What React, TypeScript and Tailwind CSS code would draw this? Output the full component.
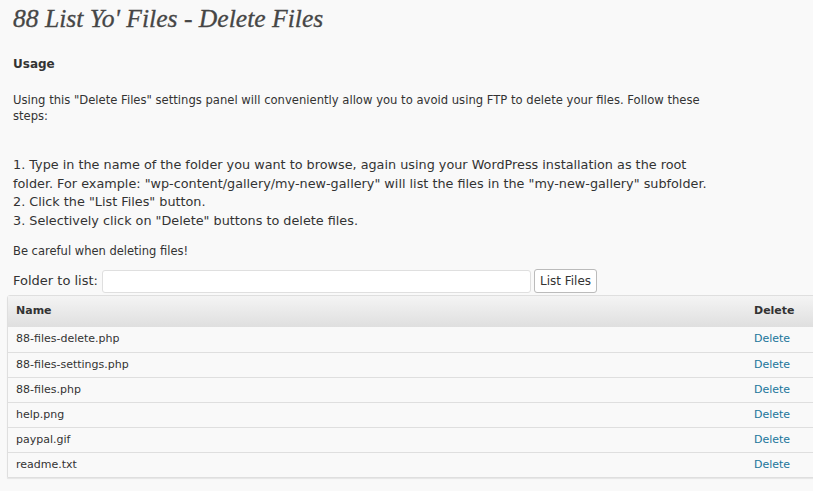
const files = [
  "88-files-delete.php",
  "88-files-settings.php",
  "88-files.php",
  "help.png",
  "paypal.gif",
  "readme.txt",
]

const body = { fontFamily: '"DejaVu Sans", "Liberation Sans", sans-serif' }

export default function App() {
  return (
    <div className="min-h-[491px] w-[813px] overflow-hidden bg-[#f9f9f9] text-[#333]" style={body}>
      <h2
        className="pl-[13px] pt-[2px] text-[25.6px] italic leading-[34px] text-[#464646]"
        style={{ fontFamily: '"Liberation Serif", "DejaVu Serif", serif', WebkitTextStroke: "0.3px #464646" }}
      >
        88 List Yo' Files - Delete Files
      </h2>

      <div className="px-[13px]">
        <h3 className="mt-[20px] text-[12px] font-bold leading-[16px]">Usage</h3>

        <p className="mt-[20px] w-[700px] text-[11.6px] leading-[16px]">
          Using this "Delete Files" settings panel will conveniently allow you to avoid using FTP to delete your files.
          Follow these steps:
        </p>

        <div className="mt-[32px] text-[12.8px] leading-[18.5px]">
          <div>
            1. Type in the name of the folder you want to browse, again using your WordPress installation as the root
          </div>
          <div>
            folder. For example: "wp-content/gallery/my-new-gallery" will list the files in the "my-new-gallery" subfolder.
          </div>
          <div>2. Click the "List Files" button.</div>
          <div>3. Selectively click on "Delete" buttons to delete files.</div>
        </div>

        <p className="mt-[13px] text-[11.5px] leading-[16px]">Be careful when deleting files!</p>

        <div className="mt-[10px] flex items-center">
          <label className="text-[13px]">Folder to list:</label>
          <input
            type="text"
            className="ml-[4px] h-[23px] w-[429px] rounded-[3px] border border-[#dfdfdf] bg-white px-1 text-[13px] outline-none"
          />
          <button className="ml-[3px] h-[24px] rounded-[3px] border border-[#bbb] bg-white px-[5px] text-[12px] leading-none text-[#333]">
            List Files
          </button>
        </div>
      </div>

      <table className="ml-[7px] mt-[2px] w-[820px] border-separate border-spacing-0 rounded-tl-[3px] border border-[#dfdfdf] shadow-[0_1px_1px_rgba(0,0,0,0.08)]">
        <thead>
          <tr className="bg-gradient-to-b from-[#f4f4f4] to-[#dfdfdf]">
            <th className="h-[31px] pl-[8px] text-left text-[11px] font-bold text-[#333]">Name</th>
            <th className="w-[72px] text-left text-[11px] font-bold text-[#333]">Delete</th>
          </tr>
        </thead>
        <tbody>
          {files.map((f, i) => (
            <tr key={f}>
              <td className={`h-[25px] pl-[8px] text-[11px] ${i > 0 ? "border-t border-[#dfdfdf]" : ""}`}>{f}</td>
              <td className={`text-[11px] text-[#21759b] ${i > 0 ? "border-t border-[#dfdfdf]" : ""}`}>
                <a href="#">Delete</a>
              </td>
            </tr>
          ))}
        </tbody>
      </table>
    </div>
  )
}
